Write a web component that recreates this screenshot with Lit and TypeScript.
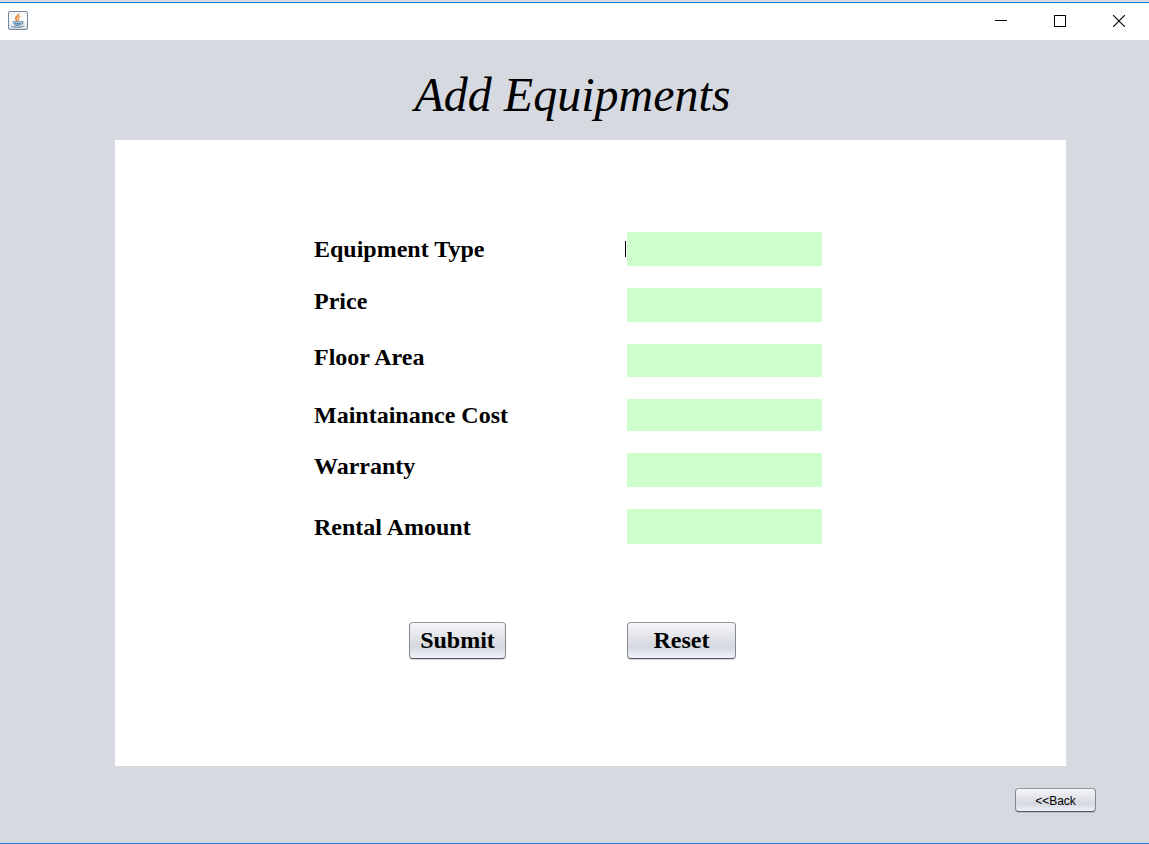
import { LitElement, html, svg, css } from "lit";
import { customElement } from "lit/decorators.js";

interface Field {
  id: string;
  label: string;
  align: "top" | "middle";
}

const FIELDS: Field[] = [
  { id: "type", label: "Equipment Type", align: "middle" },
  { id: "price", label: "Price", align: "top" },
  { id: "area", label: "Floor Area", align: "top" },
  { id: "cost", label: "Maintainance Cost", align: "middle" },
  { id: "warranty", label: "Warranty", align: "top" },
  { id: "rental", label: "Rental Amount", align: "middle" },
];

const javaIcon = svg`
  <defs>
    <linearGradient id="plate" x1="0" y1="0" x2="0" y2="1">
      <stop offset="0" stop-color="#f4f6f8" />
      <stop offset="0.5" stop-color="#fbfcfd" />
      <stop offset="1" stop-color="#d5dae0" />
    </linearGradient>
  </defs>
  <rect x="0.5" y="0.5" width="19" height="18" rx="1.5" fill="url(#plate)" stroke="#71869a" />
  <path d="M10.400 2.800c1.200 2.200-3.400 2.800-2.600 5 .3.900 1.200 1.200 1.300 2.200" fill="none" stroke="#ea8a3e" stroke-width="1.900" />
  <path d="M12.200 5.400c-2 .8-2.500 1.500-1.700 2.400.5.700.2 1.300-.5 1.900" fill="none" stroke="#ee9a58" stroke-width="1.500" />
  <path d="M4.600 10.800h8.800M5.600 12.600h7M6.600 14.200h5.400" fill="none" stroke="#6288aa" stroke-width="1.300" />
  <path d="M13 10.600c3-.6 2.500 2.300-.8 2.700" fill="none" stroke="#6288aa" stroke-width="1.200" />
  <path d="M3.800 14.900c-.4 1.600 10.200 1.700 11.600-.3" fill="none" stroke="#7594b0" stroke-width="1.200" />
`;

@customElement("app-root")
export class AppRoot extends LitElement {
  static styles = css`
    :host {
      display: flex;
      flex-direction: column;
      box-sizing: border-box;
      min-height: 100vh;
      background: #d6d9df;
      color: #000;
      border-bottom: 1px solid #1883d7;
      font-family: "Liberation Serif", "Times New Roman", serif;
    }
    .titlebar {
      display: flex;
      align-items: center;
      justify-content: space-between;
      box-sizing: border-box;
      height: 38px;
      margin-top: 2px;
      padding: 0 1px 2px 8px;
      background: #fff;
      border-top: 1px solid #1883d7;
    }
    .app-icon {
      display: block;
      width: 20px;
      height: 19px;
    }
    .controls {
      display: flex;
    }
    .control {
      display: flex;
      align-items: center;
      justify-content: center;
      width: 59px;
      height: 34px;
      padding: 0;
      border: 0;
      background: none;
    }
    .glyph {
      display: block;
      width: 12px;
      height: 12px;
    }
    .title {
      margin: 0;
      padding: 27px 4px 17px 0;
      font-size: 48px;
      line-height: 56px;
      font-weight: 400;
      font-style: italic;
      text-align: center;
    }
    .panel {
      display: flex;
      flex-direction: column;
      flex: 1;
      gap: 78px;
      margin: 0 83px 0 115px;
      padding: 92px 0;
      background: #fff;
    }
    .fields,
    .actions {
      display: grid;
      grid-template-columns: 199fr 313fr 195px 244fr;
    }
    .fields {
      grid-template-rows: 34px 34px 33px 32px 34px 35px;
      row-gap: 22px;
    }
    .label {
      grid-column: 2;
      font-size: 24px;
      line-height: 26px;
      font-weight: 700;
    }
    .top {
      align-self: start;
    }
    .middle {
      align-self: center;
    }
    .field {
      position: relative;
      display: flex;
      grid-column: 3;
    }
    .current::before {
      content: "";
      position: absolute;
      left: -2px;
      top: 9px;
      width: 1px;
      height: 16px;
      background: #000;
    }
    .input {
      flex: 1;
      min-width: 0;
      box-sizing: border-box;
      margin: 0;
      padding: 0 6px;
      border: 0;
      border-radius: 0;
      outline: 0;
      background: #cfc;
      font: 16px "Liberation Sans", Arial, sans-serif;
    }
    .button {
      box-sizing: border-box;
      padding: 0;
      border: 1px solid #83868d;
      border-top-color: #94979c;
      border-bottom-color: #55585e;
      border-radius: 4px;
      background: linear-gradient(#f6f7f9, #e4e6eb 35%, #d5d8df 68%, #f0f3f8);
      box-shadow: 0 1px 0 rgba(120, 125, 135, 0.3);
      color: #000;
    }
    .large {
      height: 37px;
      padding-bottom: 2px;
      font: 700 24px/28px "Liberation Serif", "Times New Roman", serif;
    }
    .submit {
      grid-column: 2;
      width: 97px;
      margin-left: 95px;
    }
    .reset {
      grid-column: 3;
      width: 109px;
    }
    .footer {
      display: flex;
      justify-content: flex-end;
      padding: 22px 53px 31px;
    }
    .back {
      width: 81px;
      height: 24px;
      padding-top: 2px;
      font: 12px/16px "Liberation Sans", Arial, sans-serif;
    }
  `;

  render() {
    return html`
      <header class="titlebar">
        <svg class="app-icon" viewBox="0 0 20 19" aria-hidden="true">${javaIcon}</svg>
        <div class="controls">
          <button class="control" type="button" aria-label="Minimize">
            <svg class="glyph" viewBox="0 0 12 12"><path d="M0 5.500h12" stroke="#000" /></svg>
          </button>
          <button class="control" type="button" aria-label="Maximize">
            <svg class="glyph" viewBox="0 0 12 12">
              <rect x="0.5" y="0.5" width="11" height="11" fill="none" stroke="#000" />
            </svg>
          </button>
          <button class="control" type="button" aria-label="Close">
            <svg class="glyph" viewBox="0 0 12 12">
              <path d="M0 0l12 12M12 0L0 12" stroke="#000" stroke-width="1.100" />
            </svg>
          </button>
        </div>
      </header>
      <h1 class="title">Add Equipments</h1>
      <form class="panel" @submit=${(e: Event) => e.preventDefault()}>
        <div class="fields">
          ${FIELDS.map(
            (f, i) => html`
              <label class="label ${f.align}" for=${f.id}>${f.label}</label>
              <div class="field ${i === 0 ? "current" : ""}">
                <input class="input" id=${f.id} name=${f.id} type="text" />
              </div>
            `
          )}
        </div>
        <div class="actions">
          <button class="button large submit" type="submit">Submit</button>
          <button class="button large reset" type="reset">Reset</button>
        </div>
      </form>
      <footer class="footer">
        <button class="button back" type="button">&lt;&lt;Back</button>
      </footer>
    `;
  }
}
